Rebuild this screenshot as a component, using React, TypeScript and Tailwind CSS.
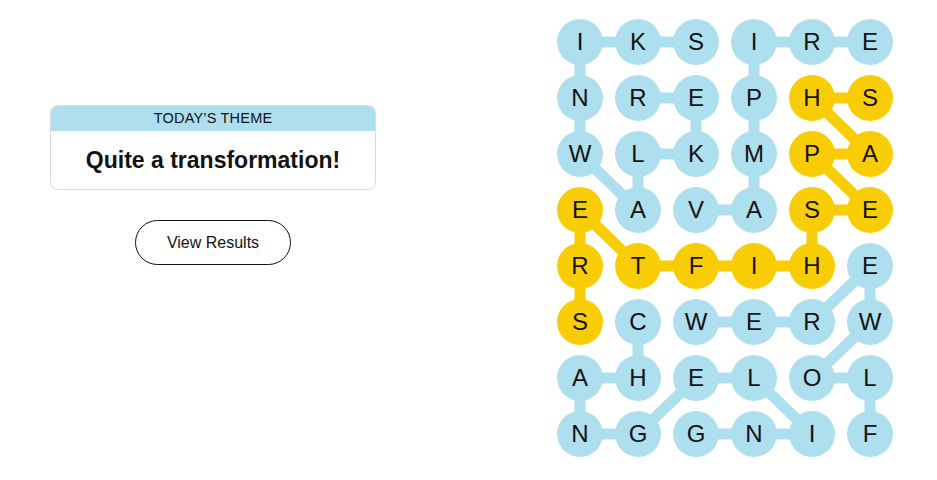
import React from 'react';

type Cell = [number, number];

const BOARD = [
  'IKSIRE',
  'NREPHS',
  'WLKMPA',
  'EAVASE',
  'RTFIHE',
  'SCWERW',
  'AHELOL',
  'NGGNIF',
];

const WORDS: { path: Cell[]; spangram?: boolean }[] = [
  // SKINWALKER
  { path: [[0, 2], [0, 1], [0, 0], [1, 0], [2, 0], [3, 1], [2, 1], [2, 2], [1, 2], [1, 1]] },
  // VAMPIRE
  { path: [[3, 2], [3, 3], [2, 3], [1, 3], [0, 3], [0, 4], [0, 5]] },
  // WEREWOLF
  { path: [[5, 2], [5, 3], [5, 4], [4, 5], [5, 5], [6, 4], [6, 5], [7, 5]] },
  // CHANGELING
  { path: [[5, 1], [6, 1], [6, 0], [7, 0], [7, 1], [6, 2], [6, 3], [7, 4], [7, 3], [7, 2]] },
  // SHAPESHIFTERS
  {
    spangram: true,
    path: [[1, 5], [1, 4], [2, 5], [2, 4], [3, 5], [3, 4], [4, 4], [4, 3], [4, 2], [4, 1], [3, 0], [4, 0], [5, 0]],
  },
];

const BLUE = '#aedfee';
const YELLOW = '#f8cd05';

const cx = (c: number) => 23 + c * 58;
const cy = (r: number) => 23 + r * 56;

function Board() {
  const yellow = new Set<string>();
  WORDS.forEach((w) => {
    if (w.spangram) w.path.forEach(([r, c]) => yellow.add(`${r}-${c}`));
  });

  return (
    <div className="relative w-[336px] h-[438px]">
      <svg className="absolute inset-0" width={336} height={438}>
        {WORDS.map((w, i) => (
          <polyline
            key={i}
            points={w.path.map(([r, c]) => `${cx(c)},${cy(r)}`).join(' ')}
            fill="none"
            stroke={w.spangram ? YELLOW : BLUE}
            strokeWidth={11}
            strokeLinejoin="round"
          />
        ))}
      </svg>
      <div className="relative grid grid-cols-[repeat(6,46px)] gap-x-[12px] gap-y-[10px]">
        {BOARD.flatMap((row, r) =>
          row.split('').map((ch, c) => (
            <div
              key={`${r}-${c}`}
              className={`w-[46px] h-[46px] rounded-full flex items-center justify-center text-[24px] text-[#121212] ${
                yellow.has(`${r}-${c}`) ? 'bg-[#f8cd05]' : 'bg-[#aedfee]'
              }`}
            >
              {ch}
            </div>
          ))
        )}
      </div>
    </div>
  );
}

export default function App() {
  return (
    <div className="w-[937px] h-[480px] bg-white flex items-start font-['Liberation_Sans',Arial,sans-serif] text-[#121212]">
      <div className="ml-[50px] mt-[105px] w-[326px] flex flex-col items-center">
        <div className="w-full rounded-lg border border-[#dcdcdc] overflow-hidden">
          <div className="h-[25px] bg-[#aedfee] flex items-center justify-center text-[14.5px] tracking-[0.2px]">
            TODAY’S THEME
          </div>
          <div className="h-[58px] flex items-center justify-center text-[23px] font-bold">
            Quite a transformation!
          </div>
        </div>
        <button className="mt-[30px] w-[156px] h-[45px] rounded-full border border-[#121212] bg-white text-[16px]">
          View Results
        </button>
      </div>
      <div className="ml-[181px] mt-[19px]">
        <Board />
      </div>
    </div>
  );
}
